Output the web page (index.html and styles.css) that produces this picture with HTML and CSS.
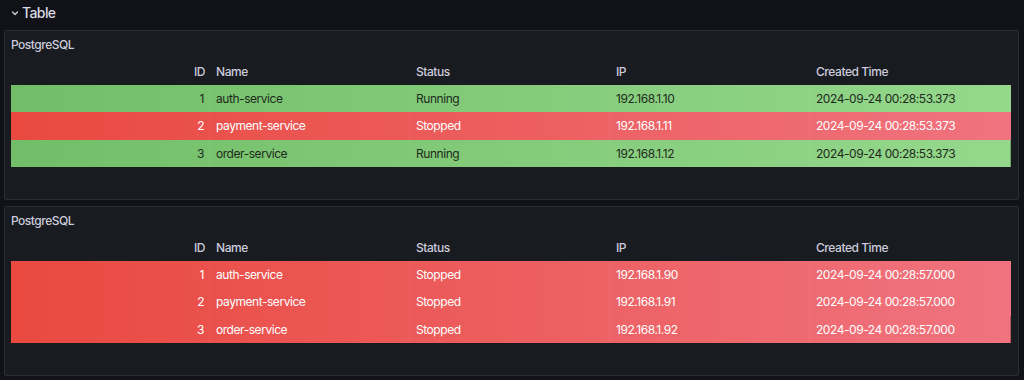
FILE: index.html
```html
<!DOCTYPE html>
<html>
<head>
<meta charset="utf-8">
<link rel="stylesheet" href="styles.css">
</head>
<body>
<div class="row-title">
  <svg class="chev" width="10" height="10" viewBox="0 0 10 10"><path d="M2.5 4 L5 6.5 L7.5 4" fill="none" stroke="#ccccdc" stroke-width="1.3" stroke-linecap="round" stroke-linejoin="round"/></svg>
  <span>Table</span>
</div>
<div class="panels">
  <section class="panel">
    <div class="panel-title">PostgreSQL</div>
    <div class="table">
      <div class="thead">
        <div class="c c-id">ID</div><div class="c">Name</div><div class="c">Status</div><div class="c">IP</div><div class="c">Created Time</div>
      </div>
      <div class="tr green">
        <div class="c c-id">1</div><div class="c">auth-service</div><div class="c">Running</div><div class="c">192.168.1.10</div><div class="c">2024-09-24 00:28:53.373</div>
      </div>
      <div class="tr red">
        <div class="c c-id">2</div><div class="c">payment-service</div><div class="c">Stopped</div><div class="c">192.168.1.11</div><div class="c">2024-09-24 00:28:53.373</div>
      </div>
      <div class="tr green">
        <div class="c c-id">3</div><div class="c">order-service</div><div class="c">Running</div><div class="c">192.168.1.12</div><div class="c">2024-09-24 00:28:53.373</div>
      </div>
    </div>
  </section>
  <section class="panel">
    <div class="panel-title">PostgreSQL</div>
    <div class="table">
      <div class="thead">
        <div class="c c-id">ID</div><div class="c">Name</div><div class="c">Status</div><div class="c">IP</div><div class="c">Created Time</div>
      </div>
      <div class="tr red">
        <div class="c c-id">1</div><div class="c">auth-service</div><div class="c">Stopped</div><div class="c">192.168.1.90</div><div class="c">2024-09-24 00:28:57.000</div>
      </div>
      <div class="tr red">
        <div class="c c-id">2</div><div class="c">payment-service</div><div class="c">Stopped</div><div class="c">192.168.1.91</div><div class="c">2024-09-24 00:28:57.000</div>
      </div>
      <div class="tr red">
        <div class="c c-id">3</div><div class="c">order-service</div><div class="c">Stopped</div><div class="c">192.168.1.92</div><div class="c">2024-09-24 00:28:57.000</div>
      </div>
    </div>
  </section>
</div>
</body>
</html>
```
FILE: styles.css
```css
html, body {
  margin: 0;
  padding: 0;
  background: #111217;
  font-family: Inter, "Noto Sans", sans-serif;
  color: #ccccdc;
  width: 1024px;
  height: 380px;
  overflow: hidden;
}
.row-title {
  height: 30px;
  display: flex;
  align-items: center;
  gap: 2px;
  padding-left: 10px;
  padding-bottom: 6px;
  box-sizing: border-box;
  font-size: 14px;
  font-weight: 500;
  letter-spacing: -0.6px;
  color: #d8d9e3;
}
.chev { margin-top: 2px; }
.panels {
  display: flex;
  flex-direction: column;
  gap: 6px;
  padding-left: 4px;
}
.panel {
  width: 1015px;
  height: 170px;
  box-sizing: border-box;
  background: #181b1f;
  border: 1px solid rgba(204, 204, 220, 0.1);
  border-radius: 2px;
  padding: 0 6px;
}
.panel-title {
  height: 26px;
  display: flex;
  align-items: center;
  font-size: 12px;
  font-weight: 500;
  letter-spacing: -0.5px;
  color: #ccccdc;
  padding-top: 1px;
  box-sizing: border-box;
}
.table {
  width: 1000px;
  font-size: 12px;
  letter-spacing: -0.45px;
}
.thead, .tr {
  display: grid;
  grid-template-columns: 199px 200px 200px 200px 201px;
}
.thead {
  height: 28px;
  align-items: center;
  font-weight: 500;
  color: #ccccdc;
}
.tr {
  height: 27.3px;
  align-items: stretch;
}
.c {
  padding: 0 6px;
  display: flex;
  align-items: center;
  white-space: nowrap;
  border-right: 1px solid rgba(255, 255, 255, 0.05);
}
.thead .c { border-right: none; }
.c:last-child { border-right: none; }
.c-id { justify-content: flex-end; padding-right: 5px; }
.green {
  background: linear-gradient(90deg, #72be68 0%, #95d88c 100%);
  color: #1f2a1d;
}
.red {
  background: linear-gradient(90deg, #e9493f 0%, #f0737f 100%);
  color: #ffffff;
}
.tr:last-child { box-shadow: inset -1px 0 0 rgba(0,0,0,0.25); }
```
